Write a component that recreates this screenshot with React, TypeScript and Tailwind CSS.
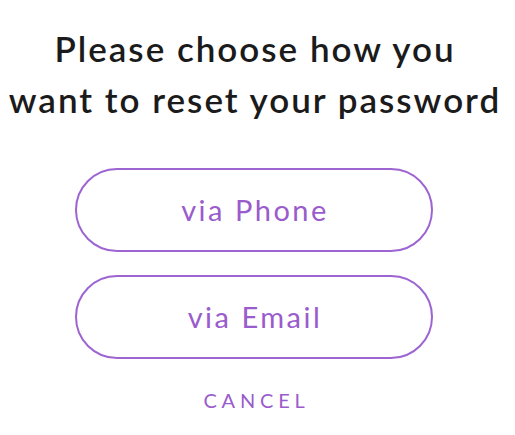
export default function App() {
  return (
    <div className="w-[515px] h-[435px] bg-white flex flex-col items-center pt-[23px] pr-[7px]" style={{ fontFamily: "Lato, 'Noto Sans', sans-serif" }}>
      <h1 className="text-[35px] leading-[51px] font-semibold tracking-[2px] pl-[2px] text-[#1b1b1b] text-center">
        Please choose how you
        <br />
        want to reset your password
      </h1>
      <div className="mt-[43px] flex flex-col gap-[23px]">
        <button className="w-[358px] h-[84px] rounded-full border-2 border-[#9d64d2] text-[29px] tracking-[2.5px] pl-[2px] text-[#9a5bcc] bg-white">
          via Phone
        </button>
        <button className="w-[358px] h-[84px] rounded-full border-2 border-[#9d64d2] text-[29px] tracking-[2.5px] pl-[2px] text-[#9a5bcc] bg-white">
          via Email
        </button>
      </div>
      <button className="mt-[29px] text-[20px] leading-[24px] tracking-[4.8px] pl-[5px] text-[#9a5bcc]">CANCEL</button>
    </div>
  );
}
